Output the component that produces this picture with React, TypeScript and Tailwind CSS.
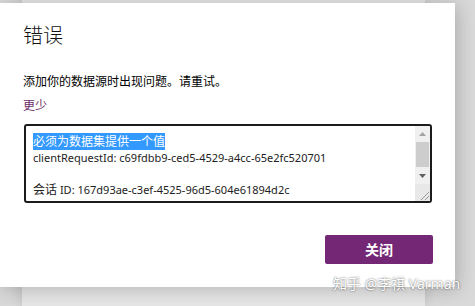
const sans = { fontFamily: '"Noto Sans", "Noto Sans CJK SC", sans-serif' };

function ScrollBar() {
  return (
    <div className="flex w-[15px] flex-col bg-[#f0f0f0]">
      <div className="flex h-[16px] items-center justify-center">
        <svg width="7" height="4" viewBox="0 0 7 4">
          <path d="M0 4 L3.5 0 L7 4 Z" fill="#a3a3a3" />
        </svg>
      </div>
      <div className="mx-[1px] h-[25px] bg-[#cdcdcd]" />
      <div className="flex h-[17px] items-center justify-center">
        <svg width="7" height="4" viewBox="0 0 7 4">
          <path d="M0 0 L7 0 L3.5 4 Z" fill="#606060" />
        </svg>
      </div>
      <div className="relative flex-1 bg-[#e8e8e8]">
        <svg className="absolute bottom-[1px] right-[1px]" width="9" height="9" viewBox="0 0 9 9">
          <path d="M9 1 L1 9 M9 5 L5 9" stroke="#9a9a9a" strokeWidth="1" />
        </svg>
      </div>
    </div>
  );
}

export default function App() {
  return (
    <div className="relative flex h-[306px] w-[475px] overflow-hidden bg-[#d9d9d9]">
      {/* page behind the dialog */}
      <div className="ml-[22px] h-full w-[403px] bg-[#e6e6e6] shadow-[0_0_12px_rgba(0,0,0,0.12)]" />

      <div
        className="absolute left-0 top-[3px] flex h-[284px] w-[455px] flex-col bg-white pl-[23px] shadow-[2px_2px_18px_rgba(0,0,0,0.22)]"
        style={sans}
      >
        <div className="pt-[21px] text-[20px] font-light leading-[24px] text-[#111]">错误</div>
        <div className="mt-[26px] text-[12px] leading-[16px] text-black">
          添加你的数据源时出现问题。请重试。
        </div>
        <div className="mt-[8px] text-[12px] leading-[16px] text-[#6b2d6b]">更少</div>

        <div className="ml-[1px] mt-[10px] flex h-[79px] w-[408px] overflow-hidden rounded-[3px] border-2 border-[#1b1b1b] bg-white">
          <div className="flex-1 pl-[7px] pt-[8px] text-[11px] leading-[16px] text-[#222]">
            <div>
              <span className="bg-[#3399ff] text-[12px] text-white">必须为数据集提供一个值</span>
            </div>
            <div>clientRequestId: c69fdbb9-ced5-4529-a4cc-65e2fc520701</div>
            <div>&nbsp;</div>
            <div>
              <span className="text-[12px]">会话</span> ID: 167d93ae-c3ef-4525-96d5-604e61894d2c
            </div>
          </div>
          <ScrollBar />
        </div>

        <div className="mt-[32px] flex justify-end pr-[22px]">
          <button className="flex h-[29px] w-[108px] items-center justify-center rounded-[2px] bg-[#742774] text-[14px] font-semibold text-white">
            关闭
          </button>
        </div>
      </div>

      <div
        className="absolute left-[333px] top-[275px] text-[14px] leading-[18px] text-white [text-shadow:0_0_2px_rgba(0,0,0,0.7)]"
        style={sans}
      >
        知乎 @李祺 Varman
      </div>
    </div>
  );
}
